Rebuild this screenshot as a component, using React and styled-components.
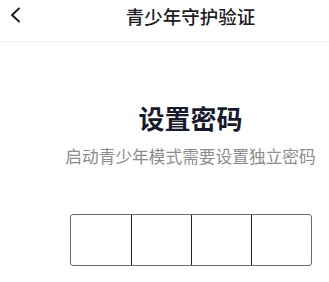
import React from 'react';
import styled, { createGlobalStyle } from 'styled-components';

const GlobalStyle = createGlobalStyle`
  html, body {
    margin: 0;
    padding: 0;
    background: #fff;
  }
  body {
    font-family: "Noto Sans CJK SC", "Noto Sans", sans-serif;
  }
`;

// the shot is cut from a wider screen: content sits centred around x=190
const Page = styled.div`
  width: 329px;
  height: 282px;
  overflow: hidden;
  background: #fff;
`;

const Header = styled.div`
  position: relative;
  height: 42px;
  border-bottom: 1px solid #efefef;
  display: flex;
  justify-content: center;
  align-items: flex-start;
  padding: 4px 0 0 52px;
  box-sizing: border-box;
`;

const Back = styled.button`
  position: absolute;
  left: 6px;
  top: 5px;
  width: 18px;
  height: 20px;
  padding: 0;
  border: none;
  background: transparent;
  display: flex;
  align-items: center;
  justify-content: center;
`;

const Title = styled.h1`
  margin: 0;
  font-size: 18.5px;
  line-height: 24px;
  font-weight: 500;
  color: #1c1c24;
  white-space: nowrap;
`;

const Main = styled.div`
  display: flex;
  flex-direction: column;
  align-items: center;
  padding: 61px 0 0 52px;
`;

const Heading = styled.h2`
  margin: 0;
  font-size: 26px;
  line-height: 30px;
  font-weight: 700;
  color: #171a2c;
  white-space: nowrap;
`;

const Sub = styled.p`
  margin: 13px 0 0;
  font-size: 16.7px;
  line-height: 20px;
  color: #8c8c8c;
  white-space: nowrap;
`;

const CodeBox = styled.div`
  margin-top: 48px;
  display: grid;
  grid-template-columns: repeat(4, 60px);
  height: 52px;
  border: 1px solid #6a6a6a;
  border-radius: 3px;
  box-sizing: border-box;
`;

const Cell = styled.div`
  border-left: ${(p) => (p.first ? 'none' : '1.5px solid #1e1e2a')};
`;

export default function App() {
  return (
    <Page>
      <GlobalStyle />
      <Header>
        <Back aria-label="返回">
          <svg width="12" height="16" viewBox="0 0 12 16">
            <polyline
              points="10,1.5 3,8 10,14.5"
              fill="none"
              stroke="#1c1c2a"
              strokeWidth="2"
              strokeLinecap="round"
              strokeLinejoin="round"
            />
          </svg>
        </Back>
        <Title>青少年守护验证</Title>
      </Header>
      <Main>
        <Heading>设置密码</Heading>
        <Sub>启动青少年模式需要设置独立密码</Sub>
        <CodeBox>
          {[0, 1, 2, 3].map((i) => (
            <Cell key={i} first={i === 0} />
          ))}
        </CodeBox>
      </Main>
    </Page>
  );
}
